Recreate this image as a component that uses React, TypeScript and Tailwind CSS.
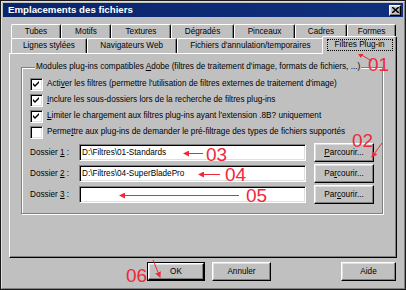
import React from 'react';

const raised =
  'bg-[#c0c0c0] border border-t-white border-l-white border-r-black border-b-black shadow-[inset_-1px_-1px_#808080,inset_1px_1px_#dfdfdf]';
const sunken =
  'bg-white border border-t-[#808080] border-l-[#808080] border-r-white border-b-white shadow-[inset_1px_1px_#000,inset_-1px_-1px_#dfdfdf]';

function U({ children }: { children: React.ReactNode }) {
  return <span className="underline underline-offset-[1px]">{children}</span>;
}

function Tab({ w, children }: { w: number; children: React.ReactNode }) {
  return (
    <div
      style={{ width: w }}
      className="h-full flex items-center justify-center border-t border-l border-t-white border-l-white border-r border-r-black rounded-t-[2px] shadow-[inset_-1px_0_#808080]"
    >
      {children}
    </div>
  );
}

function Check({ checked, children }: { checked: boolean; children: React.ReactNode }) {
  return (
    <div className="h-4 flex items-center gap-[4px]">
      <div className={`${sunken} w-[13px] h-[13px] flex items-center justify-center`}>
        {checked && (
          <svg width="7" height="7" viewBox="0 0 7 7">
            <path d="M0 2 L2 4 L6 0 L6 2 L2 6 L0 4 Z" fill="#000" />
          </svg>
        )}
      </div>
      <span>{children}</span>
    </div>
  );
}

function FolderRow({ n, value, acc }: { n: string; value: string; acc: React.ReactNode }) {
  return (
    <div className="h-[19px] flex items-center">
      <span className="w-[49px]">
        Dossier <U>{n}</U> :
      </span>
      <div className={`${sunken} w-[227px] h-[17px] flex items-center pl-[2px]`}>{value}</div>
      <button className={`${raised} ml-[8px] w-[60px] h-[19px] flex items-center justify-center`}>
        {acc}
      </button>
    </div>
  );
}

function Btn({ w, def, children }: { w: number; def?: boolean; children: React.ReactNode }) {
  return (
    <div style={{ width: w }} className={`h-[19px] ${def ? 'border border-black' : ''}`}>
      <div className={`${raised} h-full w-full flex items-center justify-center`}>{children}</div>
    </div>
  );
}

export default function App() {
  return (
    <div
      className="relative w-[406px] h-[290px] overflow-hidden bg-[#c0c0c0] border border-[#1a1a1a] text-black text-[8.2px] leading-[10px]"
      style={{ fontFamily: '"Liberation Sans", Arial, sans-serif' }}
    >
      <div className="h-full border border-t-[#dfdfdf] border-l-[#dfdfdf] border-r-[#808080] border-b-[#808080] p-[1px]">
        {/* title bar */}
        <div className="h-[14px] bg-gradient-to-r from-[#0a246a] to-[#10307e] flex items-center pl-[5px] pr-[2px]">
          <span className="text-white font-bold text-[9.7px] leading-[12px]">Emplacements des fichiers</span>
          <div className={`${raised} ml-auto w-[12px] h-[11px] flex items-center justify-center`}>
            <svg width="7" height="6" viewBox="0 0 7 6">
              <path d="M0 0 L7 6 M7 0 L0 6" stroke="#000" strokeWidth="1.5" />
            </svg>
          </div>
        </div>

        <div className="pt-[7px] px-[6px]">
          {/* tab rows */}
          <div className="ml-[2px] h-[14px] flex">
            <Tab w={50}>Tubes</Tab>
            <Tab w={50}>Motifs</Tab>
            <Tab w={60}>Textures</Tab>
            <Tab w={63}>Dégradés</Tab>
            <Tab w={61}>Pinceaux</Tab>
            <Tab w={52}>Cadres</Tab>
            <Tab w={49}>Formes</Tab>
          </div>
          <div className="ml-[2px] h-[15px] flex items-end">
            <Tab w={76}>Lignes stylées</Tab>
            <Tab w={90}>Navigateurs Web</Tab>
            <Tab w={148}>Fichiers d'annulation/temporaires</Tab>
            <div className="relative z-10 w-[75px] h-[18px] -ml-[2px] -mb-[1px] bg-[#c0c0c0] flex items-start justify-center pt-[2px] border-t border-l border-t-white border-l-white border-r border-r-black rounded-t-[2px] shadow-[inset_-1px_0_#808080]">
              <span className="border border-dotted border-black px-[7px] h-[12px] leading-[10px]">
                Filtres Plug-in
              </span>
            </div>
          </div>

          {/* panel */}
          <div className="h-[205px] border border-t-white border-l-white border-r-black border-b-black shadow-[inset_-1px_-1px_#808080] pt-[8px] pl-[11px] pr-[13px]">
            <fieldset className="border border-[#808080] shadow-[inset_1px_1px_white,1px_1px_white] pl-[8px] pt-[4px] pb-[9px]">
              <legend className="ml-[5px] px-[1px] bg-[#c0c0c0]">
                Modules plug-ins compatibles <U>A</U>dobe (filtres de traitement d'image, formats de fichiers, ...)
              </legend>
              <Check checked>
                Acti<U>v</U>er les filtres (permettre l'utilisation de filtres externes de traitement d'image)
              </Check>
              <Check checked>
                <U>I</U>nclure les sous-dossiers lors de la recherche de filtres plug-ins
              </Check>
              <Check checked>
                <U>L</U>imiter le chargement aux filtres plug-ins ayant l'extension .8B? uniquement
              </Check>
              <Check checked={false}>
                Perme<U>t</U>tre aux plug-ins de demander le pré-filtrage des types de fichiers supportés
              </Check>
              <div className="mt-[3px] flex flex-col gap-[2px]">
                <FolderRow n="1" value="D:\Filtres\01-Standards" acc={<><U>P</U>arcourir...</>} />
                <FolderRow n="2" value="D:\Filtres\04-SuperBladePro" acc={<>Pa<U>r</U>courir...</>} />
                <FolderRow n="3" value="" acc={<>Par<U>c</U>ourir...</>} />
              </div>
            </fieldset>
          </div>

          {/* dialog buttons */}
          <div className="mt-[4px] flex">
            <div className="ml-[138px]">
              <Btn w={58} def>
                OK
              </Btn>
            </div>
            <div className="ml-[7px]">
              <Btn w={59}>Annuler</Btn>
            </div>
            <div className="ml-auto mr-[1px]">
              <Btn w={55}>Aide</Btn>
            </div>
          </div>
        </div>
      </div>

      {/* red annotations */}
      <svg
        className="absolute inset-0 pointer-events-none"
        width="406"
        height="290"
        viewBox="0 0 406 290"
        style={{ fontFamily: '"Liberation Sans", Arial, sans-serif' }}
      >
        <defs>
          <marker id="ah" markerWidth="6" markerHeight="6" refX="5" refY="3" orient="auto">
            <path d="M0 0 L6 3 L0 6 Z" fill="#f0283a" />
          </marker>
        </defs>
        <g stroke="#f0283a" strokeWidth="1" fill="none">
          <line x1="371" y1="60" x2="357" y2="52" markerEnd="url(#ah)" />
          <line x1="381" y1="142" x2="371" y2="156" markerEnd="url(#ah)" />
          <line x1="202" y1="152.5" x2="183" y2="152.5" markerEnd="url(#ah)" />
          <line x1="219" y1="173.5" x2="198" y2="173.5" markerEnd="url(#ah)" />
          <line x1="238" y1="194.5" x2="119" y2="194.5" markerEnd="url(#ah)" />
          <line x1="152" y1="259" x2="159" y2="276" markerEnd="url(#ah)" />
        </g>
        <g fill="#f0283a" fontSize="19">
          <text x="367" y="70">01</text>
          <text x="351" y="146">02</text>
          <text x="205" y="160">03</text>
          <text x="224" y="180">04</text>
          <text x="245" y="201">05</text>
          <text x="125" y="281">06</text>
        </g>
      </svg>
    </div>
  );
}
